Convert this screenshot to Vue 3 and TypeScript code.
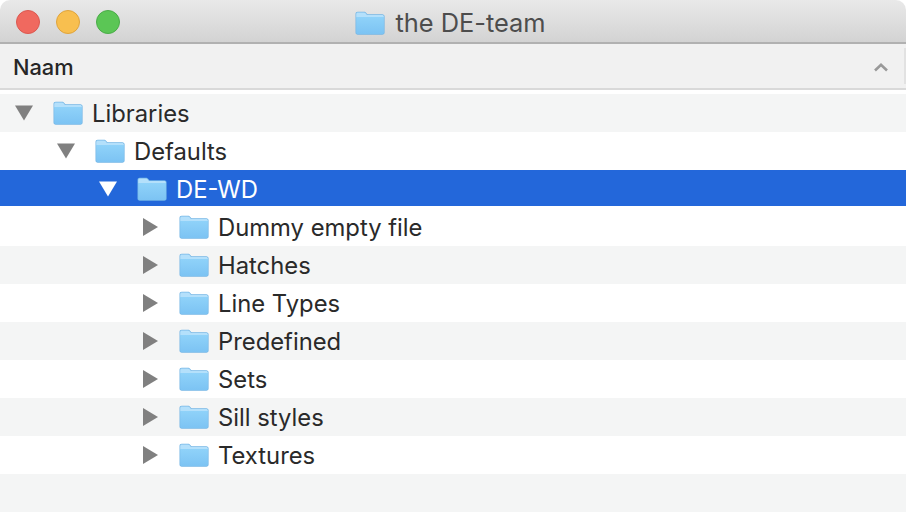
<script setup lang="ts">
interface Row { name: string; level: number; open: boolean; selected?: boolean }
const rows: Row[] = [
  { name: 'Libraries', level: 0, open: true },
  { name: 'Defaults', level: 1, open: true },
  { name: 'DE-WD', level: 2, open: true, selected: true },
  { name: 'Dummy empty file', level: 3, open: false },
  { name: 'Hatches', level: 3, open: false },
  { name: 'Line Types', level: 3, open: false },
  { name: 'Predefined', level: 3, open: false },
  { name: 'Sets', level: 3, open: false },
  { name: 'Sill styles', level: 3, open: false },
  { name: 'Textures', level: 3, open: false },
]
</script>

<template>
  <div class="window">
    <svg class="defs" width="0" height="0" aria-hidden="true">
      <defs>
        <linearGradient id="folderBody" x1="0" y1="0" x2="0" y2="1">
          <stop offset="0" stop-color="#8fd2f9" />
          <stop offset="1" stop-color="#7cc3f3" />
        </linearGradient>
        <symbol id="folder" viewBox="0 0 30 24">
          <path d="M0.5 3C0.5 1.6 1.4 0.7 2.7 0.7H8.8C10 0.7 10.6 1.1 11.3 2L12.4 3.3H27.3C28.7 3.3 29.6 4.2 29.6 5.6V21.6C29.6 22.9 28.7 23.8 27.3 23.8H2.8C1.4 23.8 0.5 22.9 0.5 21.6Z" fill="#74b6e6" />
          <path d="M1.2 3.2C1.2 2 1.9 1.4 2.9 1.4H8.7C9.7 1.4 10.2 1.7 10.8 2.5L12 4H27.2C28.2 4 28.9 4.6 28.9 5.7V6.2H1.2Z" fill="#b4e0fb" />
          <path d="M1.2 6.1H28.9V21.5C28.9 22.5 28.2 23.1 27.2 23.1H2.9C1.9 23.1 1.2 22.5 1.2 21.5Z" fill="url(#folderBody)" />
        </symbol>
      </defs>
    </svg>

    <header class="titlebar">
      <div class="lights">
        <span class="light red"></span>
        <span class="light yellow"></span>
        <span class="light green"></span>
      </div>
      <div class="title">
        <svg class="folder" width="30" height="24"><use href="#folder" /></svg>
        <span>the DE-team</span>
      </div>
    </header>

    <div class="colhead">
      <span class="colname">Naam</span>
      <svg class="chevron" width="16" height="10" viewBox="0 0 16 10">
        <path d="M2 8.5L8 2.8L14 8.5" fill="none" stroke="#999999" stroke-width="2.6" />
      </svg>
      <span class="colsep"></span>
    </div>

    <div class="list">
      <div
        v-for="(row, i) in rows"
        :key="row.name"
        class="row"
        :class="{ odd: i < 1 || (i > 3 && i % 2 === 0), selected: row.selected }"
      >
        <div class="rowinner" :style="{ paddingLeft: 14 + row.level * 42 + 'px' }">
          <span class="disc">
            <svg v-if="row.open" width="20" height="16" viewBox="0 0 20 16">
              <path d="M1 0.5H19L10 15.5Z" />
            </svg>
            <svg v-else width="20" height="18" viewBox="0 0 20 18">
              <path d="M3 0V18L18 9Z" />
            </svg>
          </span>
          <svg class="folder" width="30" height="24"><use href="#folder" /></svg>
          <span class="name">{{ row.name }}</span>
        </div>
      </div>
      <div class="row odd"></div>
    </div>
  </div>
</template>

<style>
html, body { background: #fff; }
</style>

<style scoped>
.window {
  width: 906px;
  height: 532px;
  background: #fff;
  font-family: Inter, "Noto Sans", sans-serif;
  overflow: hidden;
}
.defs { position: absolute; }
.titlebar {
  height: 44px;
  box-sizing: border-box;
  display: flex;
  align-items: center;
  justify-content: center;
  background: linear-gradient(#e9e9e9, #d3d3d3);
  border-bottom: 2px solid #b1b1b1;
  border-radius: 10px 10px 0 0;
  position: relative;
}
.lights {
  position: absolute;
  left: 16px;
  top: 10px;
  display: flex;
  gap: 16px;
}
.light {
  width: 24px;
  height: 24px;
  box-sizing: border-box;
  border-radius: 50%;
  border: 1px solid;
}
.red { background: #f0695f; border-color: #dc5850; }
.yellow { background: #f8bf4f; border-color: #e0a43c; }
.green { background: #5bc655; border-color: #4aac48; }
.title {
  display: flex;
  align-items: center;
  gap: 10px;
  font-size: 25.4px;
  color: #4d4d4d;
  margin-left: -5px;
  margin-top: 3px;
}
.colhead {
  height: 46px;
  box-sizing: border-box;
  display: flex;
  align-items: center;
  justify-content: space-between;
  padding: 2px 2px 0 13px;
  background: #f1f1f1;
  border-bottom: 2px solid #d9d9d9;
}
.colname {
  font-size: 21.8px;
  font-weight: 500;
  color: #262626;
}
.chevron { margin-left: auto; margin-right: 15px; }
.colsep { width: 2px; height: 36px; background: #e2e2e2; margin-right: -2px; margin-top: -2px; }
.list { padding-top: 4px; }
.row { height: 38px; background: #fff; }
.row.odd { background: #f4f5f5; }
.row.selected { background: linear-gradient(#2367da 36px, #fff 36px); }
.rowinner {
  height: 38px;
  display: flex;
  align-items: center;
  box-sizing: border-box;
}
.disc {
  width: 20px;
  margin-right: 19px;
  display: flex;
  align-items: center;
  fill: #808080;
}
.row.selected .disc { fill: #fff; }
.folder { flex: none; display: block; }
.name {
  margin-left: 9px;
  font-size: 23.8px;
  color: #2a2a2a;
}
.row.selected .name { color: #fff; }
</style>
